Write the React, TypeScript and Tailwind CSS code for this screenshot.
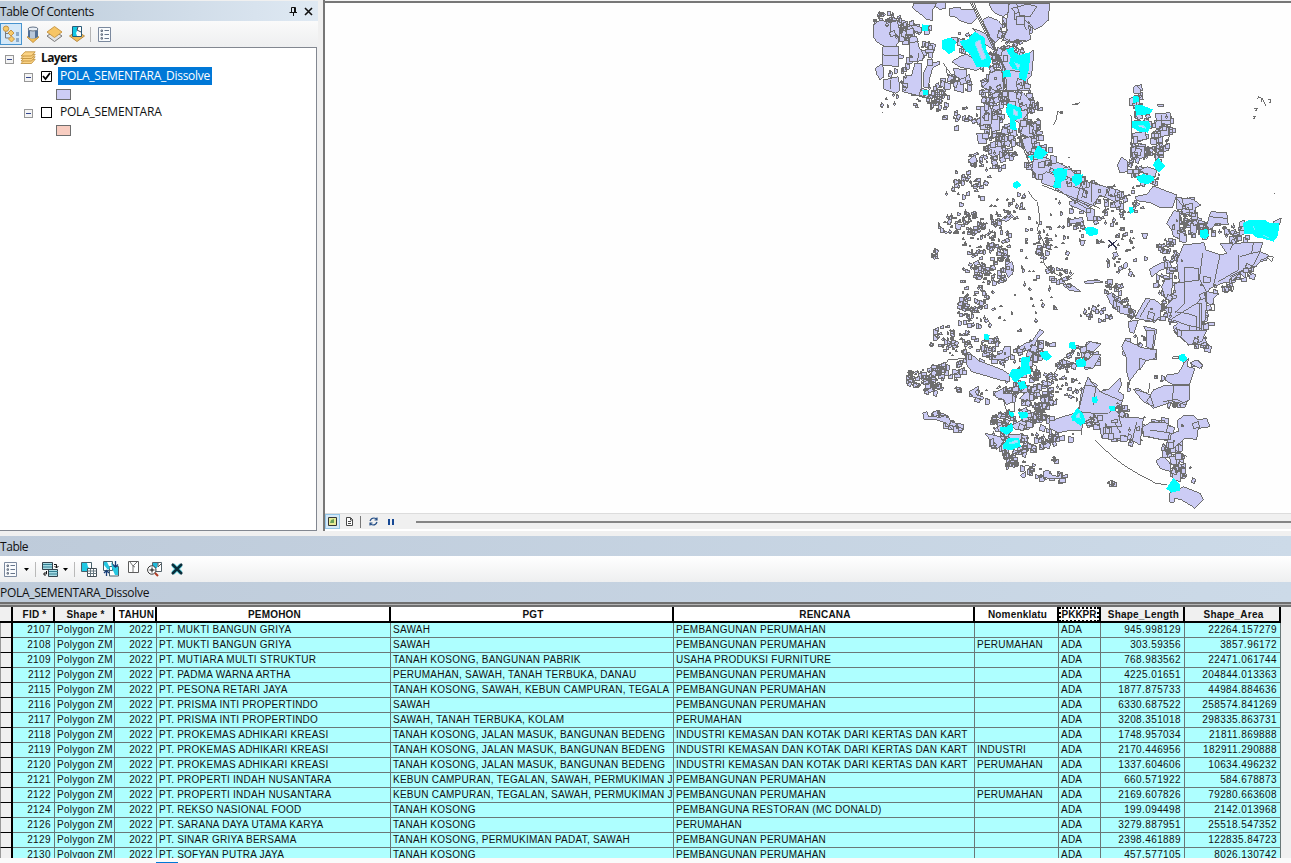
import React from "react";

type Row = [string, string, string, string, string, string, string];

const rows: Row[] = [
  ["2107", "PT. MUKTI BANGUN GRIYA", "SAWAH", "PEMBANGUNAN PERUMAHAN", "", "945.998129", "22264.157279"],
  ["2108", "PT. MUKTI BANGUN GRIYA", "SAWAH", "PEMBANGUNAN PERUMAHAN", "PERUMAHAN", "303.59356", "3857.96172"],
  ["2109", "PT. MUTIARA MULTI STRUKTUR", "TANAH KOSONG, BANGUNAN PABRIK", "USAHA PRODUKSI FURNITURE", "", "768.983562", "22471.061744"],
  ["2112", "PT. PADMA WARNA ARTHA", "PERUMAHAN, SAWAH, TANAH TERBUKA, DANAU", "PEMBANGUNAN PERUMAHAN", "", "4225.01651", "204844.013363"],
  ["2115", "PT. PESONA RETARI JAYA", "TANAH KOSONG, SAWAH, KEBUN CAMPURAN, TEGALA", "PEMBANGUNAN PERUMAHAN", "", "1877.875733", "44984.884636"],
  ["2116", "PT. PRISMA INTI PROPERTINDO", "SAWAH", "PEMBANGUNAN PERUMAHAN", "", "6330.687522", "258574.841269"],
  ["2117", "PT. PRISMA INTI PROPERTINDO", "SAWAH, TANAH TERBUKA, KOLAM", "PERUMAHAN", "", "3208.351018", "298335.863731"],
  ["2118", "PT. PROKEMAS ADHIKARI KREASI", "TANAH KOSONG, JALAN MASUK, BANGUNAN BEDENG", "INDUSTRI KEMASAN DAN KOTAK DARI KERTAS DAN KART", "", "1748.957034", "21811.869888"],
  ["2119", "PT. PROKEMAS ADHIKARI KREASI", "TANAH KOSONG, JALAN MASUK, BANGUNAN BEDENG", "INDUSTRI KEMASAN DAN KOTAK DARI KERTAS DAN KART", "INDUSTRI", "2170.446956", "182911.290888"],
  ["2120", "PT. PROKEMAS ADHIKARI KREASI", "TANAH KOSONG, JALAN MASUK, BANGUNAN BEDENG", "INDUSTRI KEMASAN DAN KOTAK DARI KERTAS DAN KART", "PERUMAHAN", "1337.604606", "10634.496232"],
  ["2121", "PT. PROPERTI INDAH NUSANTARA", "KEBUN CAMPURAN, TEGALAN, SAWAH, PERMUKIMAN J", "PEMBANGUNAN PERUMAHAN", "", "660.571922", "584.678873"],
  ["2122", "PT. PROPERTI INDAH NUSANTARA", "KEBUN CAMPURAN, TEGALAN, SAWAH, PERMUKIMAN J", "PEMBANGUNAN PERUMAHAN", "PERUMAHAN", "2169.607826", "79280.663608"],
  ["2124", "PT. REKSO NASIONAL FOOD", "TANAH KOSONG", "PEMBANGUNA RESTORAN (MC DONALD)", "", "199.094498", "2142.013968"],
  ["2126", "PT. SARANA DAYA UTAMA KARYA", "TANAH KOSONG", "PERUMAHAN", "", "3279.887951", "25518.547352"],
  ["2129", "PT. SINAR GRIYA BERSAMA", "TANAH KOSONG, PERMUKIMAN PADAT, SAWAH", "PEMBANGUNAN PERUMAHAN", "", "2398.461889", "122835.84723"],
  ["2130", "PT. SOFYAN PUTRA JAYA", "TANAH KOSONG", "PEMBANGUNAN PERUMAHAN", "", "457.577105", "8026.130742"],
];

/* ---------- map data ---------- */

// Map sheets: origin in map pixels; parcels are digitised at three units per pixel.
const sheets: { x: number; y: number; land: string; lines: string; selected: string }[] = [
  {
    x: 860,
    y: 0,
    land: "M160 10L230 10L218 30L218 62L200 58L185 45L158 25ZM228 8L258 8L258 25L240 28L228 20ZM270 25L300 22L306 30L342 28L352 52L332 72L300 62L290 52L270 48ZM40 75L60 60L90 68L112 62L118 90L116 128L105 140L70 138L50 125L40 110ZM68 140L115 138L116 200L68 195ZM46 205L68 190L72 230L60 240L50 222ZM70 240L115 230L120 270L108 280L72 268ZM150 80L160 75L185 82L183 98L160 92L148 95ZM148 112L170 108L176 138L190 165L188 182L148 186ZM130 230L155 225L165 190L185 190L186 290L155 282L128 275ZM192 215L205 192L240 184L240 192L218 203L210 232L205 262L192 262ZM205 138L217 136L217 175L205 172ZM275 185L300 170L318 162L350 182L378 190L350 212L320 205L300 202ZM280 205L320 210L318 232L300 240L285 225ZM368 60L385 50L415 62L428 78L418 115L405 130L390 110L375 85ZM388 12L445 10L445 38L430 50L410 42L395 30ZM448 10L568 10L566 60L545 78L525 88L505 75L512 118L498 125L470 118L455 128L430 120L440 90L440 60ZM455 25L505 12L530 20L510 50L470 45ZM418 155L450 145L500 165L522 150L515 225L502 240L508 270L440 272L430 230L418 190ZM388 215L425 210L432 270L395 272L368 262L385 245ZM445 275L490 278L512 305L500 345L480 370L445 350ZM362 320L392 318L395 345L420 350L420 390L395 395L392 372L362 376ZM385 435L425 440L428 460L400 470L385 462ZM350 400L375 402L380 432L355 430ZM490 375L530 370L530 405L505 412L482 400ZM485 418L512 410L520 450L500 460ZM520 480L545 470L590 485L620 500L650 525L650 540L530 540L515 510ZM338 85L372 98L405 125L400 150L372 130ZM325 480L345 465L352 485L335 492ZM275 240L310 245L312 278L285 272Z",
    lines: "M332 10L428 200L430 260L446 330L470 400L500 470L530 540M342 10L436 205L440 268L452 320M337 10L432 202L434 264L448 325M90 68L92 100L118 110M148 128L176 125M172 190L176 160M70 165L116 168M92 240L92 268M250 190L285 240L330 248M470 10L480 50L520 80M420 80L430 110L450 125M480 55L500 90M455 150L490 170M450 210L510 222M470 280L480 320L510 330M395 345L395 372M580 375L590 355L592 335L608 338M395 272L505 272M430 60L442 90L425 125M438 125L498 122M258 205L262 225L300 235M635 314L658 310",
    selected: "M188 76L203 78L202 90L190 92ZM250 122L270 115L285 125L282 150L268 160L250 145ZM302 125L325 120L345 98L372 115L375 145L392 180L385 200L350 198L335 165L318 150ZM442 150L458 145L460 158L478 168L508 160L505 205L495 240L480 232L482 210L460 205L450 190L455 172ZM430 215L448 212L450 228L432 230ZM445 312L480 325L485 350L463 360L468 388L452 385L452 355L440 335ZM190 272L203 274L202 284L192 284ZM525 460L535 440L560 458L545 475L525 472ZM508 470L518 468L515 480ZM580 515L595 505L620 510L615 530L600 538L585 528ZM645 525L660 525L660 540L645 540Z",
  },
  {
    x: 1060,
    y: 70,
    land: "M220 55L228 45L242 58L240 72L222 70ZM210 85L230 80L240 95L235 108L210 108ZM285 132L330 128L332 165L305 160L300 178L282 172L290 150ZM300 172L325 172L326 195L302 200ZM218 190L255 185L260 208L235 212L218 205ZM213 232L255 228L255 262L230 268L213 265ZM172 285L185 260L203 275L203 305L180 308ZM240 300L262 290L290 300L285 320L265 318ZM270 205L290 208L290 225L272 222ZM290 105L312 104L310 110L294 109Z",
    lines: "M332 128L332 155L326 210L305 240M35 102L50 104L60 97M592 88L595 80L604 84L606 95M606 85L618 108M625 90L633 90L630 98L626 95M583 116L592 114L590 122L584 121M578 138L586 139L583 146L578 143M0 125L8 124L8 130L0 130M213 135L215 262M282 150L330 152M642 370L646 370M305 135L305 165",
    selected: "M220 82L233 80L235 94L222 96ZM228 108L245 108L275 120L268 130L230 134ZM218 155L265 155L270 170L262 185L238 182L218 170ZM280 285L295 268L312 288L298 304ZM232 322L250 315L278 320L280 330L262 340L240 335ZM40 320L65 317L62 335L50 345L40 335ZM0 298L18 300L18 315L5 330L0 330ZM208 415L216 414L220 425L212 428Z",
  },
  {
    x: 900,
    y: 170,
    land: "M318 285L335 275L342 290L338 312L325 322L318 310ZM488 345L510 340L542 365L510 362ZM302 150L330 128L340 140L320 154ZM540 212L556 210L550 228L542 226ZM508 95L528 90L585 120L580 150L562 152L560 128L510 105ZM508 150L548 142L550 155L510 162ZM556 335L592 328L592 338L556 340ZM425 15L440 5L462 15L540 30L660 62L655 100L600 75L575 110L510 85L470 55L425 40ZM620 370L660 400L660 425L640 415ZM638 250L650 245L655 258L642 262ZM98 258L108 262L103 270ZM165 160L185 165L180 180L166 176Z",
    lines: "M385 62L395 80L412 95L420 150L412 180L430 215L428 240L432 280L445 300L480 318L500 345M500 330L522 308M505 330L515 325M425 45L600 115M575 40L575 95M545 30L530 90M510 85L560 115M520 50L555 60L545 85M625 55L610 90",
    selected: "M342 40L352 36L360 45L350 54L343 50ZM465 0L498 0L495 25L482 35L480 52L462 50L468 30ZM524 18L546 16L540 35L528 45ZM558 176L575 172L592 180L590 192L570 196L560 188ZM255 496L266 498L264 508L256 506ZM510 520L522 518L526 535L512 533Z",
  },
  {
    x: 1060,
    y: 170,
    land: "M225 80L262 72L280 48L350 75L338 112L300 112L270 98L230 92ZM350 82L400 88L422 105L408 112L402 130L375 120L350 118ZM325 150L342 122L358 125L358 205L340 200L335 180L320 160ZM392 160L412 158L408 190L392 188ZM452 125L500 128L505 165L470 160L448 180L440 165ZM360 185L380 195L378 218L360 215ZM370 225L432 218L438 240L482 255L500 250L480 220L608 218L600 245L625 255L620 270L600 275L588 290L555 300L558 325L540 310L515 335L490 338L450 355L440 368L438 420L430 500L440 515L415 525L388 525L345 490L340 470L355 460L325 450L320 425L312 415L340 385L345 340L358 335L350 275ZM268 298L290 285L325 270L335 290L302 300L275 320ZM315 330L338 325L335 370L318 390L305 350ZM232 430L258 385L285 390L305 405L300 440L280 455L225 445ZM205 455L235 450L222 490L208 485ZM140 375L155 368L165 390L205 415L208 435L180 430L150 398ZM250 468L290 478L285 510L280 540L260 530L268 500ZM190 530L192 515L210 522L250 535L290 542L288 570L262 565L240 600L200 600L200 560L188 555ZM438 365L478 370L460 385L462 400L450 405L438 395ZM75 528L85 515L120 520L100 545ZM72 588L100 558L122 555L100 595L75 598ZM370 570L378 575L390 600L372 600ZM395 580L415 570L428 585L425 595L410 588L395 590ZM72 335L98 330L128 334L128 338L75 340ZM190 285L200 275L204 288L192 298ZM245 190L262 190L260 206L250 205ZM540 155L555 150L555 190L538 200ZM640 155L664 143L658 165L645 170Z",
    lines: "M428 248L418 330L345 340M420 330L440 365L410 400L330 450M480 255L460 350M535 255L535 300L475 335M375 292L415 295L415 330M375 292L375 400L345 430M410 400L425 400L425 500M418 400L418 500M410 440L410 500M345 425L380 430L410 440M340 450L380 465L425 475M390 465L388 500M540 260L575 250L600 245L580 285L550 300L510 320M584 288L550 303L512 323M580 220L575 248M520 218L510 240M350 85L375 118L365 85M448 140L500 145M600 272L630 258L640 262L635 275L620 262M450 405L465 405L462 422L438 420M430 470L440 470L440 480L430 480M512 335L522 355L516 365L510 345M335 562L355 558L358 565L335 566M510 185L525 210M232 500L232 530M232 430L208 455M270 390L240 440",
    selected: "M424 182L440 180L444 195L436 205L424 200ZM552 160L570 152L615 152L625 160L655 162L652 195L640 212L605 202L590 200L575 188L555 190ZM360 558L374 558L378 568L368 574L360 568ZM50 575L62 568L75 575L70 590L55 590Z",
  },
  {
    x: 890,
    y: 320,
    land: "M225 95L240 98L265 122L308 138L338 150L360 165L358 185L330 180L290 168L245 155L230 135ZM305 110L335 100L345 78L362 80L362 108L340 118L310 118ZM378 90L405 70L425 65L450 28L462 35L440 60L430 85L400 95L380 95ZM238 215L265 198L268 205L255 215L262 225L282 232L278 238L250 232ZM312 220L340 205L342 222L378 218L375 240L350 255L340 238L318 232ZM388 235L415 210L420 230L418 245ZM98 278L112 275L115 288L150 292L172 285L180 300L200 325L190 332L170 310L140 300L102 297ZM285 340L330 350L340 365L325 385L300 380L300 360ZM355 345L380 345L395 340L392 365L360 360ZM475 305L505 295L545 282L610 275L612 290L580 308L575 330L535 332L505 338L480 325ZM565 275L575 210L590 190L595 170L605 185L622 195L612 235L605 275ZM612 240L640 210L660 208L660 280L625 275L605 262ZM635 310L660 305L660 355L640 355L630 330ZM460 455L475 450L485 465L505 470L515 455L515 488L508 475L475 475L460 470ZM588 80L600 65L632 72L610 95L588 90ZM580 130L610 105L632 105L610 145L585 142ZM392 465L408 455L405 472L395 472ZM375 395L410 388L410 398L382 400ZM365 315L395 300L410 310L398 330L375 328Z",
    lines: "M222 72L232 100L228 125M150 150L175 120L225 115M340 240L350 275L375 275L375 240M428 190L440 180L440 140L425 130M465 375L480 345L480 325M575 330L575 345M405 435L425 440L420 445M340 125L345 145M490 165L520 115L545 105M50 160L65 150L70 185",
    selected: "M285 45L295 46L296 56L287 56ZM395 115L418 112L415 135L422 158L400 164L388 175L375 185L360 165L368 150L392 150L395 135ZM385 188L402 186L408 202L392 206ZM452 100L470 95L482 110L470 120L458 112ZM542 68L552 70L552 80L540 82ZM562 125L580 120L585 135L568 138ZM608 233L620 234L620 246L608 244ZM360 277L370 280L368 288L361 286ZM388 280L410 280L412 290L395 294ZM332 325L350 325L364 312L368 330L350 342L334 332ZM342 375L355 358L385 357L390 378L362 388L342 384ZM548 300L560 270L575 278L580 300L575 312L550 300Z",
  },
  {
    x: 1050,
    y: 330,
    land: "M215 50L225 30L260 45L285 55L320 60L315 85L290 92L270 85L268 115L238 155L230 125L228 80ZM290 0L315 0L310 25L308 58L288 50ZM345 150L350 135L385 130L405 95L415 85L412 110L435 115L418 165L370 165ZM420 98L440 90L458 105L450 115L430 105ZM310 180L340 168L418 165L418 210L395 220L370 215L310 235L290 215ZM250 178L262 175L300 195L312 230L280 215ZM85 245L105 165L115 140L125 160L138 170L150 185L175 178L210 145L215 165L205 185L222 195L215 220L190 235L175 250L132 250ZM132 250L175 250L190 235L215 260L280 265L275 300L270 345L245 330L225 315L208 325L155 325L148 280ZM278 290L300 278L345 278L368 290L360 330L340 330L280 318ZM382 272L400 258L430 255L445 270L470 265L480 290L445 295L440 328L405 325L370 355L348 350L358 310L385 305ZM318 392L340 378L360 400L362 425L330 415ZM358 380L390 380L385 405L365 405ZM366 425L392 425L392 455L370 450ZM358 490L400 470L450 490L460 510L435 535L420 525L395 510L375 505L372 517L360 517ZM370 0L470 0L455 35L415 45L395 22Z",
    lines: "M136 330L155 350L190 382L225 408L270 435L318 460L352 465M105 165L138 170L130 225M370 165L368 215M150 185L220 215M260 275L245 340M205 255L215 290L170 290L155 325M285 318L340 330M300 300L370 310M360 350L410 380M250 178L295 190L300 160M190 270L205 300M340 215L380 208L395 215M175 455L185 450L190 462L180 465M365 82L385 78L388 84L368 86M340 350L375 380L388 425",
    selected: "M62 38L70 40L75 48L64 52ZM80 92L100 88L105 102L90 110L82 104ZM128 204L138 202L142 212L132 216ZM180 230L192 230L192 242L182 242ZM65 262L82 238L98 255L104 275L92 284L78 275ZM392 76L402 74L408 84L400 92L392 86ZM352 475L370 448L388 465L388 480L365 485Z",
  },
];

// Clusters of small parcels: centre, radii, rotation in degrees, count, smallest and largest side.
const clusters: number[][] = [
  [886, 18, 14, 7, 0, 34, 2, 4], [898, 29, 12, 10, 0, 40, 3, 7], [914, 26, 14, 9, 0, 20, 3, 6],
  [920, 48, 12, 14, 20, 16, 3, 8], [900, 70, 14, 18, 0, 20, 2, 6], [920, 88, 14, 5, 0, 10, 3, 8],
  [937, 95, 12, 17, 10, 55, 2, 5], [905, 98, 28, 10, 0, 14, 1, 3], [955, 80, 16, 9, 10, 32, 3, 6],
  [965, 42, 16, 10, 20, 25, 3, 6], [992, 60, 12, 16, 40, 35, 3, 7], [1003, 20, 14, 14, 50, 20, 3, 8],
  [1012, 45, 10, 8, 0, 22, 2, 6], [1030, 15, 18, 10, 0, 14, 4, 9], [952, 120, 12, 9, 0, 14, 2, 5],
  [972, 113, 18, 8, 0, 18, 2, 4], [987, 84, 12, 13, 0, 34, 3, 6], [998, 100, 16, 10, 0, 40, 3, 7],
  [993, 125, 19, 17, 10, 65, 3, 7], [1000, 143, 22, 13, 10, 60, 2, 6], [985, 160, 20, 8, 10, 38, 2, 5],
  [1020, 95, 10, 18, 0, 40, 3, 7], [1027, 113, 11, 16, 0, 40, 3, 8], [1027, 136, 10, 22, -10, 60, 3, 7],
  [1038, 158, 15, 18, -30, 60, 3, 7], [1058, 174, 28, 11, 25, 70, 3, 8], [1100, 192, 24, 9, 20, 60, 3, 7],
  [1136, 99, 5, 14, 0, 28, 3, 7], [1141, 118, 9, 8, 0, 16, 3, 7], [1160, 130, 10, 18, 5, 50, 3, 7],
  [1139, 145, 9, 14, 0, 40, 3, 7], [1154, 153, 13, 9, 0, 24, 2, 6], [1147, 175, 14, 7, 10, 24, 2, 6],
  [1135, 171, 5, 5, 0, 12, 2, 5], [1125, 163, 6, 8, 0, 9, 2, 6], [1120, 198, 28, 22, 0, 35, 1, 3],
  [970, 175, 18, 10, 0, 22, 2, 4], [965, 190, 20, 14, 10, 26, 1, 4], [960, 222, 24, 12, 0, 70, 1, 4],
  [985, 238, 26, 18, -10, 80, 1, 4], [990, 262, 22, 20, 0, 90, 2, 5], [1005, 207, 22, 14, -30, 42, 1, 4],
  [975, 285, 18, 26, 5, 55, 2, 4], [968, 312, 14, 20, 5, 50, 2, 4], [942, 336, 14, 12, -25, 30, 2, 4],
  [960, 345, 24, 12, 0, 45, 2, 4], [1010, 300, 45, 35, 0, 45, 1, 3], [1042, 244, 7, 13, 0, 22, 2, 5],
  [1058, 274, 15, 8, 20, 25, 2, 5], [1060, 225, 35, 30, 0, 40, 1, 3], [1085, 213, 22, 16, 0, 38, 2, 4],
  [1112, 230, 22, 20, 0, 38, 1, 4], [1125, 260, 20, 17, 0, 24, 1, 4], [1040, 250, 30, 35, 0, 24, 1, 3],
  [1180, 220, 9, 16, 5, 60, 2, 5], [1195, 226, 12, 9, 0, 35, 2, 6], [1168, 245, 12, 8, 0, 26, 2, 5],
  [1210, 226, 15, 8, 0, 24, 2, 5], [1234, 232, 12, 9, 0, 25, 3, 7], [1190, 205, 10, 9, 0, 16, 4, 8],
  [1172, 260, 10, 10, 0, 25, 2, 6], [1165, 282, 12, 16, 0, 26, 2, 6], [1200, 275, 5, 14, 0, 14, 3, 7],
  [1222, 283, 15, 4, -20, 20, 2, 6], [1245, 267, 18, 7, -40, 20, 2, 6], [1203, 305, 7, 20, 0, 22, 3, 7],
  [1168, 304, 9, 13, 0, 30, 2, 6], [1153, 310, 11, 9, 0, 26, 3, 6], [1110, 288, 12, 8, 35, 22, 2, 5],
  [1121, 303, 18, 6, 45, 34, 2, 6], [1094, 312, 16, 9, 0, 24, 2, 4], [1198, 340, 12, 5, 0, 26, 3, 6],
  [1173, 322, 18, 8, 30, 16, 2, 6], [1140, 340, 16, 6, 10, 14, 2, 6],
  [930, 374, 20, 8, -25, 58, 3, 6], [910, 376, 5, 9, 0, 24, 2, 5], [930, 386, 9, 5, 0, 22, 3, 5],
  [955, 370, 9, 10, 0, 16, 3, 6], [992, 348, 13, 10, 30, 40, 3, 6], [970, 355, 10, 8, 0, 14, 3, 6],
  [1030, 350, 22, 11, -10, 55, 3, 6], [1026, 380, 13, 16, 0, 65, 3, 6], [1043, 385, 10, 12, 0, 34, 3, 6],
  [1004, 390, 12, 8, 0, 24, 3, 6], [1035, 402, 20, 6, 0, 38, 3, 6], [1010, 418, 22, 9, -5, 60, 3, 6],
  [1037, 418, 14, 8, 0, 40, 3, 6], [1000, 435, 12, 11, 0, 42, 3, 7], [1013, 451, 13, 5, 0, 24, 3, 6],
  [1030, 440, 12, 10, 0, 28, 3, 6], [1048, 435, 8, 12, 30, 32, 2, 5], [1009, 460, 6, 5, 0, 28, 2, 4],
  [1030, 468, 12, 6, 30, 16, 2, 5], [1052, 476, 10, 6, 0, 14, 2, 6], [943, 418, 18, 5, 20, 24, 3, 6],
  [952, 425, 6, 5, 0, 10, 3, 6], [1083, 352, 13, 10, 30, 40, 2, 6], [1063, 361, 10, 10, -45, 24, 2, 5],
  [1060, 385, 22, 18, 0, 45, 1, 3], [1118, 411, 7, 9, 0, 45, 2, 5], [1102, 421, 14, 6, 0, 35, 3, 7],
  [1118, 428, 13, 8, 0, 24, 4, 8], [1090, 418, 10, 6, 0, 15, 3, 7], [1135, 432, 10, 11, 0, 22, 3, 8],
  [1152, 424, 18, 9, 0, 14, 4, 8], [1172, 450, 13, 10, 20, 36, 3, 7], [1176, 468, 7, 9, 0, 30, 3, 6],
  [1170, 440, 10, 6, 0, 14, 3, 7], [1158, 378, 5, 4, 0, 9, 2, 4], [1177, 401, 12, 4, -10, 20, 2, 5],
  [1187, 421, 7, 5, 0, 10, 3, 6], [1110, 482, 3, 3, 0, 8, 2, 4], [1052, 458, 2, 3, 0, 6, 2, 4],
  [934, 253, 4, 5, 0, 8, 2, 4], [955, 389, 5, 2, 0, 5, 2, 4], [1185, 470, 12, 6, 30, 12, 2, 6],
  [982, 393, 15, 5, 0, 12, 2, 6], [1060, 435, 20, 4, -20, 9, 3, 7], [1127, 385, 5, 3, 0, 5, 1, 3],
];

function generator(seed: number) {
  let s = seed;
  return () => {
    s = (s + 0x6d2b79f5) | 0;
    let t = Math.imul(s ^ (s >>> 15), 1 | s);
    t = (t + Math.imul(t ^ (t >>> 7), 61 | t)) ^ t;
    return ((t ^ (t >>> 14)) >>> 0) / 4294967296;
  };
}

function parcels(c: number[], seed: number, share: number) {
  const [cx, cy, rx, ry, deg, n, lo, hi] = c;
  const rnd = generator(seed * 7919 + 13);
  const a = (deg * Math.PI) / 180;
  const count = Math.round(n * share);
  let d = "";
  for (let i = 0; i < count; i++) {
    const r = Math.sqrt(rnd());
    const t = rnd() * Math.PI * 2;
    const u = Math.cos(t) * r * rx;
    const v = Math.sin(t) * r * ry;
    const x = Math.round(cx + u * Math.cos(a) - v * Math.sin(a)) + 0.5;
    const y = Math.max(4.5, Math.round(cy + u * Math.sin(a) + v * Math.cos(a)) + 0.5);
    const base = i % 3 === 0 ? 1 : lo;
    const top = i % 3 === 0 ? 2 : hi + 1;
    const w = Math.round(base + rnd() * (top - base) * 0.8);
    const h = Math.round(base + rnd() * (top - base) * 0.8);
    const k = Math.round((rnd() - 0.5) * 4);
    d += `M${x} ${y}l${w} ${k}l${-k / 2} ${h}l${-w} ${-k / 2}Z`;
  }
  return d;
}

function MapCanvas() {
  return (
    <svg className="block h-[511px] w-[966px]" viewBox="325 3 966 511" shapeRendering="crispEdges">
      {clusters.map((c, i) => (
        <path key={i} d={parcels(c, i + 1, 0.6)} fill="#ccccf5" stroke="#6e6e6e" strokeWidth={1} />
      ))}
      {sheets.map((s, i) => (
        <g key={i} transform={`translate(${s.x} ${s.y}) scale(0.33333)`} stroke="#6e6e6e" strokeWidth={3}>
          <path d={s.land} fill="#ccccf5" />
          <path d={s.lines} fill="none" />
        </g>
      ))}
      {clusters.map((c, i) => (
        <path key={i} d={parcels(c, i + 301, 0.16)} fill="#ccccf5" stroke="#6e6e6e" strokeWidth={1} />
      ))}
      <path d="M1068 157h2M931 90h2M882 112h1" fill="none" stroke="#6e6e6e" />
      {sheets.map((s, i) => (
        <path key={i} transform={`translate(${s.x} ${s.y}) scale(0.33333)`} d={s.selected} fill="#00ffff" stroke="#00ffff" strokeWidth={5} />
      ))}
      <path d="M975 43l5-3l2 8l4 10l-4 2l-4-9ZM1013 109l5 3l-1 4l-4-2ZM1009 443l8-3l1 2l-7 2ZM1076 417l3-4l1 5ZM1015 63l5 2l-2 4ZM1138 126l5-1l3 4M1253 226l2 4M1263 235l6 3" fill="#ccccf5" stroke="#7deaff" strokeWidth={1} />
      <path d="M1108.500 240l8 8M1117 240l-9 8" stroke="#30304e" fill="none" />
    </svg>
  );
}

/* ---------- icons ---------- */

const Expander = () => (
  <svg className="h-[9px] w-[9px]" viewBox="0 0 9 9" shapeRendering="crispEdges">
    <path d="M.5 .5h8v8h-8Z" fill="#f4f4f4" stroke="#979797" />
    <path d="M2 4.500h5" stroke="#34478f" />
  </svg>
);

const ListIcon = () => (
  <svg className="h-[15px] w-[13px]" viewBox="0 0 13 15">
    <path d="M.5 .5h12v14h-12Z" fill="#f9fbfd" stroke="#7b899e" />
    <path d="M3 3h1.500v1.500H3ZM3 6.800h1.500v1.500H3ZM3 10.600h1.500v1.500H3Z" fill="none" stroke="#475468" strokeWidth=".8" />
    <path d="M6.500 3.500h4.500M6.500 7.500h4.500M6.500 11.500h4.500" stroke="#66758b" />
  </svg>
);

const TreeIcon = () => (
  <svg className="h-[18px] w-[18px]" viewBox="0 0 18 18">
    <path d="M3.500 5v8h6M4 8.500h5" fill="none" stroke="#777b80" />
    <circle cx="4" cy="3.700" r="2.700" fill="#f7c966" stroke="#c49348" />
    <path d="m9 5 3 3-3 3-3-3ZM9.500 11l3 3-3 3-3-3Z" fill="#f8ca66" stroke="#c49348" />
    <path d="M14 8h3M14 10h3M14 14h3M14 16h3" stroke="#456f9b" />
  </svg>
);

const SourceIcon = () => (
  <svg className="h-[17px] w-[14px]" viewBox="0 0 14 17">
    <path d="M1 11 7 9l6 2-6 5.500Z" fill="#f2bd55" stroke="#c69542" />
    <path d="M2 3v8q5 3 10 0V3" fill="#526f96" />
    <path d="M4 4v8q3 1 5 0V4" fill="#b8c7da" />
    <ellipse cx="7" cy="3" rx="5" ry="2" fill="#e8eef5" stroke="#657488" />
  </svg>
);

const SheetsIcon = () => (
  <svg className="h-[16px] w-[17px]" viewBox="0 0 17 16">
    <path d="m1 10 7.500-5 7.500 5-7.500 5.500Z" fill="#e1e3e5" stroke="#777" />
    <path d="m1 6 7.500-5.500L16 6l-7.500 5.500Z" fill="#f6c566" stroke="#c89848" />
  </svg>
);

const SelectionIcon = () => (
  <svg className="h-[16px] w-[16px]" viewBox="0 0 16 16">
    <path d="m.5 10 3-2h9l3 2L8 15.500Z" fill="#f0bd5c" stroke="#b88b45" />
    <path d="M3.500 .5h9v10h-9Z" fill="#fff" stroke="#285b78" />
    <path d="M4 1h5l-1 4-1 2 1 3H4Z" fill="#13c9e4" />
    <path d="M9 1 8 4l4 2" fill="none" stroke="#445" />
  </svg>
);

const LayersIcon = () => (
  <svg className="h-[14px] w-[16px]" viewBox="0 0 16 14">
    {[8, 5.5, 3, 0.5].map((y) => (
      <path key={y} d={`M1 ${y + 4.5}L5 ${y + 0.3}H15.200L11.500 ${y + 4.5}Z`} fill="#fbd384" stroke="#bd8c35" strokeWidth=".8" />
    ))}
  </svg>
);

const Caret = () => (
  <svg className="h-[3px] w-[5px]" viewBox="0 0 5 3"><path d="M0 0h5L2.500 3Z" fill="#000" /></svg>
);

const RelatedIcon = () => (
  <svg className="h-[15px] w-[17px]" viewBox="0 0 17 15">
    <path d="M.5 .5h10v7H.5ZM6.500 7.500h9v7h-9Z" fill="#a7dce5" stroke="#33414b" />
    <path d="M1 2.500h9M1 5h9M7 9.500h9M7 12h9" stroke="#337f92" />
    <path d="M12 2.500h2.500V6M12.500 4l2 2 2-2M4.500 9v3H2M3.500 10l-2 2 2 2" fill="none" stroke="#111" />
  </svg>
);

const SelectAttrIcon = () => (
  <svg className="h-[15px] w-[17px]" viewBox="0 0 17 15">
    <path d="M.5 .5h10v9H.5Z" fill="#fff" stroke="#47606b" />
    <path d="M1 1h5l1 4 3 2v2H1Z" fill="#21c8e3" />
    <path d="M6.500 6.500h9v8h-9Z" fill="#fff" stroke="#414c54" />
    <path d="M6.500 9h9M6.500 11.500h9M9.500 7v7M12.500 7v7" stroke="#667780" />
  </svg>
);

const SwitchIcon = () => (
  <svg className="h-[16px] w-[16px]" viewBox="0 0 16 16">
    <path d="M.5 .5h9v9h-9ZM6.500 5.500h9v9.500h-9Z" fill="#fff" stroke="#45606d" />
    <path d="M1 1h3l3 6-2 2-4-5ZM8 1l3 5h4v8h-3L9 7Z" fill="#25c8e2" />
    <path d="M3.500 15V9.500m-2.500 2.500 2.500-2.500L6 12M12.500 0v6m-2.500-2.500 2.500 2.500L15 3.500" fill="none" stroke="#173e78" strokeWidth="1.300" />
  </svg>
);

const ClearIcon = () => (
  <svg className="h-[12px] w-[11px]" viewBox="0 0 11 12">
    <path d="M.5 .5h10v11H.5Z" fill="#fff" stroke="#5c5c5c" />
    <path d="M2 1l3 4 4-4M5 5v6M5 5l2 1" fill="none" stroke="#777" />
  </svg>
);

const ZoomIcon = () => (
  <svg className="h-[15px] w-[15px]" viewBox="0 0 15 15">
    <path d="M5.500 .5h9v9h-9Z" fill="#fff" stroke="#55636b" />
    <path d="M6 1h5l-1 5-4 1Z" fill="#20bbdc" />
    <path d="M11 1v4l3-3" fill="none" stroke="#555" />
    <circle cx="4.800" cy="8" r="4.200" fill="#fff" stroke="#333" />
    <path d="M2.500 8h5M5 5.500v5" stroke="#111" />
    <path d="m8 11 3 3" stroke="#ae3a23" strokeWidth="2" />
  </svg>
);

const DeleteIcon = () => (
  <svg className="h-[12px] w-[12px]" viewBox="0 0 12 12">
    <path d="m2 2 8 8M10 2l-8 8" stroke="#58d1df" strokeWidth="4" />
    <path d="m1 1 10 10M11 1 1 11" stroke="#092d3b" strokeWidth="2.500" />
  </svg>
);

/* ---------- panels ---------- */

function TocPanel() {
  return (
    <section className="flex w-[318px] shrink-0 flex-col pt-px">
      <header className="flex h-5 shrink-0 items-center bg-linear-to-r from-[#bccbda] to-[#dfe9f3] text-[12px] tracking-[-0.4px]">
        <span className="grow pt-px">Table Of Contents</span>
        <svg className="mr-[7px] h-[9px] w-[8px]" viewBox="0 0 8 9"><path d="M2.500 5V.5h4V5M.500 5.500h7.500M4.500 5v4M5.500 1v4" fill="none" stroke="#111" /></svg>
        <svg className="mr-[5px] h-[9px] w-[9px]" viewBox="0 0 9 9"><path d="m1 1 7 7M8 1 1 8" stroke="#111" strokeWidth="1.600" /></svg>
      </header>
      <div className="flex h-[26px] shrink-0 items-center bg-linear-to-b from-[#fafafa] to-[#eeeff0]">
        <div className="flex h-[22px] w-[22px] items-center justify-center border border-[#4794cf] bg-[#d4e8f8]"><TreeIcon /></div>
        <div className="ml-[4px]"><SourceIcon /></div>
        <div className="ml-[6px]"><SheetsIcon /></div>
        <div className="ml-[6px]"><SelectionIcon /></div>
        <div className="ml-[5px] h-[15px] w-px bg-[#b5b5b5]" />
        <div className="ml-[7px]"><ListIcon /></div>
      </div>
      <div className="mr-px flex h-[484px] flex-col border-y border-r border-[#828790] bg-white pt-px text-[12px]">
        <div className="flex h-[18px] items-center pl-[5px]">
          <div className="pt-[2px]"><Expander /></div>
          <div className="ml-1.5"><LayersIcon /></div>
          <span className="ml-[5px] font-bold tracking-[-0.58px]">Layers</span>
        </div>
        <div className="flex h-[18px] items-center pl-6">
          <div className="pt-[2px]"><Expander /></div>
          <svg className="ml-2 mt-px h-[11px] w-[11px]" viewBox="0 0 11 11"><path d="M.5 .5h10v10H.5Z" fill="#fff" stroke="#000" /><path d="m2 5 2.500 3L9 2" fill="none" stroke="#000" strokeWidth="1.800" /></svg>
          <span className="ml-[6px] flex h-[18px] w-[154px] items-center bg-[#0078d7] pl-[2px] whitespace-nowrap text-white tracking-[-0.26px]">POLA_SEMENTARA_Dissolve</span>
        </div>
        <div className="flex h-[18px] items-center pl-14"><div className="mt-px h-[11px] w-[15px] border border-[#6e6e6e] bg-[#ccccf5]" /></div>
        <div className="flex h-[18px] items-center pl-6">
          <div className="pt-[2px]"><Expander /></div>
          <div className="ml-2 mt-px h-[11px] w-[11px] border border-black bg-white" />
          <span className="ml-2 tracking-[-0.22px]">POLA_SEMENTARA</span>
        </div>
        <div className="flex h-[18px] items-center pl-14"><div className="mt-px h-[11px] w-[15px] border border-[#6e6e6e] bg-[#f8cdc1]" /></div>
      </div>
    </section>
  );
}

function MapPanel() {
  return (
    <section className="ml-[5px] flex h-[531px] min-w-0 grow flex-col overflow-hidden border-l-2 border-[#777]">
      <div className="flex h-[3px] shrink-0 flex-col bg-[#f5f5f5]"><div className="mt-px h-[2px] bg-[#777]" /></div>
      <div className="h-[511px] shrink-0 border-b border-[#dcdcdc] bg-[#fefefe]"><MapCanvas /></div>
      <div className="flex h-[15px] items-center bg-[#f0f0f0]">
        <div className="flex h-[15px] w-[15px] items-center justify-center border border-[#93c5e7] bg-[#d4e9f8]">
          <svg className="h-[9px] w-[9px]" viewBox="0 0 9 9"><path d="M.5 .5h8v8h-8Z" fill="#e7eb98" stroke="#353535" /><path d="m2 6 1-3 3-1v4Z" fill="#69a15a" /></svg>
        </div>
        <svg className="ml-[6px] h-[9px] w-[7px]" viewBox="0 0 7 9"><path d="M.5 .5h4l2 2v6h-6ZM2 4.500h3M2 6.500h3M4.500 1v2h2" fill="#fff" stroke="#333" strokeWidth=".9" /></svg>
        <div className="ml-[7px] h-3 w-px bg-[#777]" />
        <svg className="ml-[8px] h-[9px] w-[9px]" viewBox="0 0 9 9"><path d="M1 4Q2 1 5 1q2 0 3 2M8 .5V3H5.500M8 5Q7 8 4 8 2 8 1 6M1 8.500V6h2.500" fill="none" stroke="#254f87" strokeWidth="1.200" /></svg>
        <svg className="ml-[10px] h-[6px] w-[6px]" viewBox="0 0 6 6"><path d="M1 0v6M5 0v6" stroke="#164894" strokeWidth="2" /></svg>
        <div className="ml-[22px] h-[2px] grow bg-[#858585]" />
      </div>
      <div className="h-[2px] bg-white" />
    </section>
  );
}

function Head({ children, grey = false, focus = false }: { children?: React.ReactNode; grey?: boolean; focus?: boolean }) {
  return (
    <div className={`flex h-[16px] justify-center border-r-2 border-b-2 border-black font-bold leading-[16px] whitespace-nowrap ${focus ? "tracking-[0px]" : "pl-[3px] tracking-[0.2px]"} ${grey ? "bg-[#f0f0f0]" : "bg-white"}`}>
      {focus ? <div className="flex h-[15px] w-full items-center justify-center border-2 border-dotted border-black leading-[11px]">{children}</div> : children}
    </div>
  );
}

const gridColumns = "grid w-[1281px] grid-cols-[13px_42px_60px_42px_234px_283px_301px_84px_42px_84px_96px]";
const textCell = "h-[15px] overflow-hidden border-r border-b border-[#6a7777] pl-[2px] leading-[14px] whitespace-nowrap tracking-[0.24px]";
const numberCell = "h-[15px] overflow-hidden border-r border-b border-[#6a7777] pr-[3px] text-right leading-[14px] whitespace-nowrap tracking-[0.4px]";

function TablePanel() {
  return (
    <section className="flex h-[327px] flex-col">
      <header className="flex h-5 shrink-0 items-center bg-linear-to-r from-[#becbda] to-[#ccdae8] pt-[2px] text-[12px] tracking-[-0.45px]">Table</header>
      <div className="flex h-[26px] shrink-0 items-center bg-linear-to-b from-white to-[#eeeff0] pl-1">
        <ListIcon />
        <div className="ml-[7px]"><Caret /></div>
        <div className="ml-[6px] h-[15px] w-px bg-[#b9b9b9]" />
        <div className="ml-[6px]"><RelatedIcon /></div>
        <div className="ml-[4px]"><Caret /></div>
        <div className="ml-[6px] h-[15px] w-px bg-[#b9b9b9]" />
        <div className="ml-[6px]"><SelectAttrIcon /></div>
        <div className="ml-[5px]"><SwitchIcon /></div>
        <div className="ml-[9px] -mt-[4px]"><ClearIcon /></div>
        <div className="ml-[8px]"><ZoomIcon /></div>
        <div className="ml-[9px]"><DeleteIcon /></div>
      </div>
      <div className="flex h-5 shrink-0 items-center bg-linear-to-r from-[#becbda] to-[#ccdae8] pt-[2px] text-[12px] tracking-[-0.3px]">POLA_SEMENTARA_Dissolve</div>
      <div className="h-[5px] shrink-0 border-y-2 border-[#6f6f6f] bg-[#b5b5b5]" />
      <div className="h-[251px] shrink-0 overflow-hidden bg-[#f0f0f0] font-['Liberation_Sans',Arial,sans-serif] text-[10px]">
        <div className={gridColumns}>
          <Head grey />
          <Head grey>FID *</Head>
          <Head grey>Shape *</Head>
          <Head>TAHUN</Head>
          <Head>PEMOHON</Head>
          <Head>PGT</Head>
          <Head>RENCANA</Head>
          <Head>Nomenklatu</Head>
          <Head focus>PKKPR</Head>
          <Head grey>Shape_Length</Head>
          <Head grey>Shape_Area</Head>
        </div>
        {rows.map(([fid, pemohon, pgt, rencana, nomen, length, area]) => (
          <div key={fid} className={`${gridColumns} bg-[#aeffff]`}>
            <div className="h-[15px] border-r-2 border-b border-l border-black border-l-[#999] bg-[#f0f0f0]" />
            <div className={numberCell}>{fid}</div>
            <div className={textCell}>Polygon ZM</div>
            <div className={numberCell}>2022</div>
            <div className={textCell}>{pemohon}</div>
            <div className={textCell}>{pgt}</div>
            <div className={textCell}>{rencana}</div>
            <div className={textCell}>{nomen}</div>
            <div className={textCell}>ADA</div>
            <div className={numberCell}>{length}</div>
            <div className={numberCell}>{area}</div>
          </div>
        ))}
      </div>
      <div className="flex h-[5px] shrink-0 items-end bg-[#fafafa] pl-[156px]"><div className="h-px w-[22px] bg-[#0078d7]" /></div>
    </section>
  );
}

export default function App() {
  return (
    <main className="flex h-[863px] w-[1291px] flex-col overflow-hidden bg-[#f0f0f0] font-['Open_Sans','Noto_Sans',sans-serif] text-[#111]">
      <div className="flex h-[536px] shrink-0">
        <TocPanel />
        <MapPanel />
      </div>
      <TablePanel />
    </main>
  );
}
